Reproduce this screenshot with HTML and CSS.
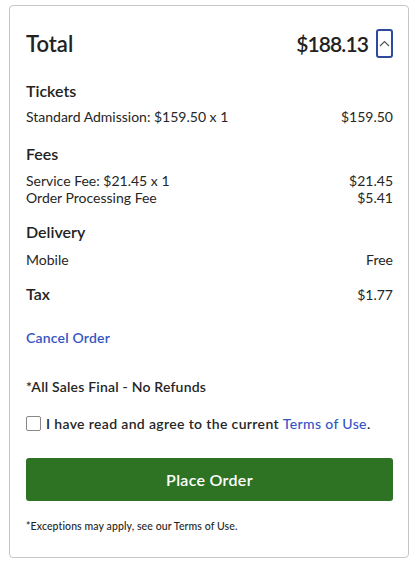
FILE: index.html
```html
<!DOCTYPE html>
<html lang="en">
<head>
<meta charset="utf-8">
<link rel="stylesheet" href="styles.css">
</head>
<body>
<div class="card">
  <div class="header">
    <span class="total-label">Total</span>
    <div class="total-right">
      <span class="total-amount">$188.13</span>
      <button class="toggle" aria-label="Collapse">
        <svg width="11" height="7" viewBox="0 0 11 7"><path d="M1 6 L5.5 1.5 L10 6" fill="none" stroke="#555" stroke-width="1.2"/></svg>
      </button>
    </div>
  </div>

  <div class="section sec-tickets">
    <div class="heading">Tickets</div>
    <div class="row"><span>Standard Admission: $159.50 x 1</span><span>$159.50</span></div>
  </div>

  <div class="section sec-fees">
    <div class="heading">Fees</div>
    <div class="row"><span>Service Fee: $21.45 x 1</span><span>$21.45</span></div>
    <div class="row"><span>Order Processing Fee</span><span>$5.41</span></div>
  </div>

  <div class="section sec-delivery">
    <div class="heading">Delivery</div>
    <div class="row"><span>Mobile</span><span>Free</span></div>
  </div>

  <div class="section sec-tax">
    <div class="row tax-row"><span class="heading">Tax</span><span>$1.77</span></div>
  </div>

  <a class="cancel" href="#">Cancel Order</a>

  <div class="final">*All Sales Final - No Refunds</div>

  <label class="agree">
    <span class="checkbox"></span>
    <span>I have read and agree to the current <a href="#" class="terms">Terms of Use</a>.</span>
  </label>

  <button class="place">Place Order</button>

  <div class="exceptions">*Exceptions may apply, see our Terms of Use.</div>
</div>
</body>
</html>
```
FILE: styles.css
```css
* { box-sizing: border-box; }
body {
  margin: 0;
  background: #fff;
  font-family: Lato, "Open Sans", sans-serif;
  color: #262626;
}
.card {
  margin: 5px 0 0 9px;
  width: 400px;
  height: 553px;
  border: 1px solid #c6c6c6;
  border-radius: 4px;
  padding: 23px 15px 0 16px;
  display: flex;
  flex-direction: column;
}
.header {
  display: flex;
  justify-content: space-between;
  align-items: center;
  height: 29px;
}
.total-label, .total-amount {
  font-size: 22px;
  font-weight: 600;
  color: #222;
}
.total-amount { font-size: 21px; letter-spacing: -0.9px; }
.total-right {
  display: flex;
  align-items: center;
  gap: 8px;
}
.toggle {
  width: 17px;
  height: 29px;
  border: 2px solid #2f4a9c;
  border-radius: 3px;
  background: #fff;
  padding: 0;
  display: flex;
  align-items: center;
  justify-content: center;
}
.heading {
  font-size: 16px;
  line-height: 20px;
  font-weight: 600;
  color: #222;
}
.row {
  display: flex;
  justify-content: space-between;
  font-size: 14px;
  line-height: 17px;
}
.sec-tickets { margin-top: 23px; }
.sec-tickets .heading { margin-bottom: 7px; }
.sec-fees { margin-top: 19px; }
.sec-fees .heading { margin-bottom: 8px; }
.sec-delivery { margin-top: 16px; }
.sec-delivery .heading { margin-bottom: 9px; }
.sec-tax { margin-top: 16px; }
.tax-row { align-items: center; }
.cancel {
  margin-top: 25px;
  font-size: 14px;
  line-height: 17px;
  font-weight: 600;
  color: #3555c4;
  text-decoration: none;
  align-self: flex-start;
  letter-spacing: 0.2px;
}
.final {
  margin-top: 32px;
  font-size: 14px;
  line-height: 17px;
  font-weight: 600;
  letter-spacing: 0.2px;
}
.agree {
  margin-top: 20px;
  display: flex;
  align-items: center;
  gap: 5px;
  font-size: 14px;
  line-height: 17px;
  font-weight: 600;
  letter-spacing: 0.35px;
}
.checkbox {
  width: 15px;
  height: 15px;
  border: 1px solid #888;
  border-radius: 2px;
  flex: none;
}
.terms {
  color: #3555c4;
  text-decoration: none;
  font-weight: 500;
}
.place {
  margin-top: 26px;
  height: 43px;
  width: 100%;
  border: none;
  border-radius: 3px;
  background: #2e7324;
  color: #fff;
  font-family: inherit;
  font-size: 16px;
  font-weight: 600;
  letter-spacing: 0.3px;
}
.exceptions {
  margin-top: 19px;
  font-size: 10.5px;
  line-height: 12px;
  font-weight: 500;
  letter-spacing: 0.1px;
}
```
